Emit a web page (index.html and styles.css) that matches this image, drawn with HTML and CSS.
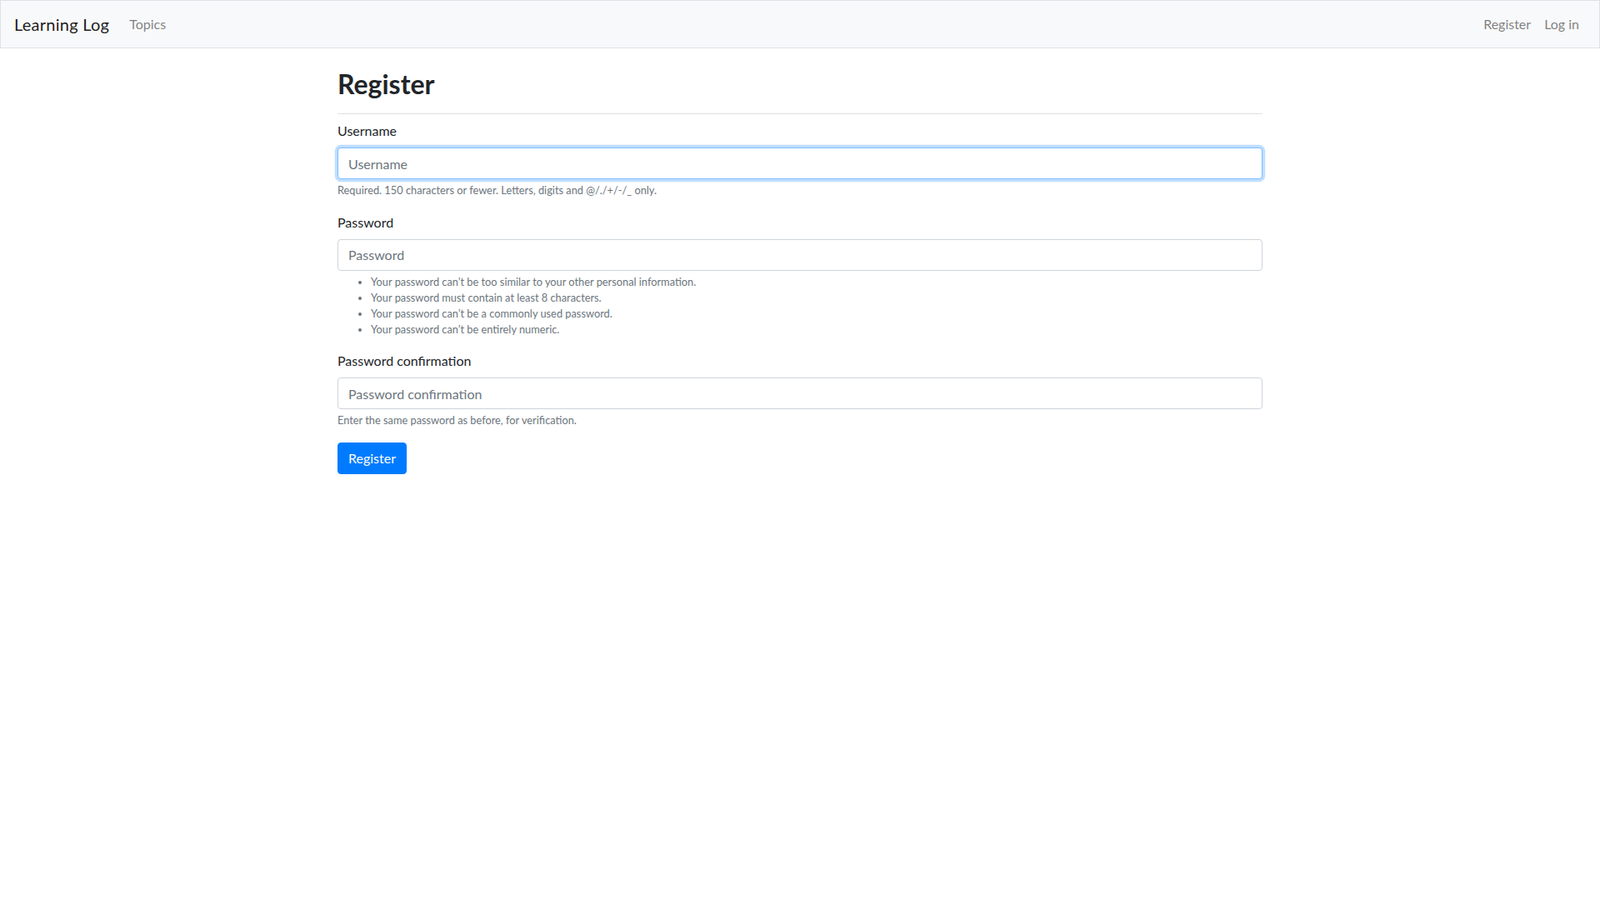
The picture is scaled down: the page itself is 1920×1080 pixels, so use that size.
FILE: index.html
```
<!DOCTYPE html>
<html lang="en">
<head>
<meta charset="utf-8">
<title>Learning Log</title>
<link rel="stylesheet" href="styles.css">
</head>
<body>
<nav class="navbar">
  <div class="nav-left">
    <a class="brand" href="#">Learning Log</a>
    <a class="nav-link" href="#">Topics</a>
  </div>
  <div class="nav-right">
    <a class="nav-link" href="#">Register</a>
    <a class="nav-link" href="#">Log in</a>
  </div>
</nav>
<main class="container">
  <div class="page-header">
    <h2 class="title">Register</h2>
  </div>
  <form class="form">
    <div class="form-group">
      <label class="label" for="id_username">Username</label>
      <input class="form-control is-focused" id="id_username" type="text" placeholder="Username">
      <small class="form-text">Required. 150 characters or fewer. Letters, digits and @/./+/-/_ only.</small>
    </div>
    <div class="form-group">
      <label class="label" for="id_password1">Password</label>
      <input class="form-control" id="id_password1" type="password" placeholder="Password">
      <small class="form-text">
        <ul class="help-list">
          <li>Your password can’t be too similar to your other personal information.</li>
          <li>Your password must contain at least 8 characters.</li>
          <li>Your password can’t be a commonly used password.</li>
          <li>Your password can’t be entirely numeric.</li>
        </ul>
      </small>
    </div>
    <div class="form-group">
      <label class="label" for="id_password2">Password confirmation</label>
      <input class="form-control" id="id_password2" type="password" placeholder="Password confirmation">
      <small class="form-text">Enter the same password as before, for verification.</small>
    </div>
    <button class="btn-primary" type="button">Register</button>
  </form>
</main>
</body>
</html>
```
FILE: styles.css
```
* { box-sizing: border-box; }
html, body {
  margin: 0;
  padding: 0;
  background: #fff;
}
body {
  font-family: "Segoe UI", Lato, "Noto Sans", sans-serif;
  font-size: 16px;
  line-height: 1.5;
  color: #212529;
}
a { text-decoration: none; }

.navbar {
  display: flex;
  justify-content: space-between;
  align-items: center;
  background: #f8f9fa;
  border: 1px solid #dee2e6;
  padding: 8px 16px;
  margin-bottom: 24px;
}
.nav-left, .nav-right {
  display: flex;
  align-items: center;
}
.brand {
  font-size: 20px;
  line-height: 30px;
  padding: 5px 0;
  margin-right: 16px;
  letter-spacing: 0.25px;
  color: rgba(0,0,0,.9);
}
.nav-link {
  display: block;
  padding: 8px 8px;
  line-height: 24px;
  color: rgba(0,0,0,.5);
}

.container {
  width: 1140px;
  margin: 0 auto;
  padding: 0 15px;
}
.page-header {
  padding-bottom: 8px;
  margin-bottom: 8px;
  border-bottom: 1px solid #dee2e6;
}
.title {
  margin: 0 0 8px;
  font-size: 32px;
  font-weight: 700;
  line-height: 1.2;
}
.form-group {
  margin-bottom: 16px;
}
.label {
  display: inline-block;
  margin-bottom: 8px;
}
.form-control {
  display: block;
  width: 100%;
  height: 38px;
  padding: 6px 12px;
  font-family: inherit;
  font-size: 16px;
  line-height: 1.5;
  color: #495057;
  background: #fff;
  border: 1px solid #ced4da;
  border-radius: 4px;
  outline: none;
}
.form-control::placeholder {
  color: #6c757d;
  opacity: 1;
}
.form-control.is-focused {
  border-color: #80bdff;
  box-shadow: 0 0 0 3.2px rgba(0,123,255,.25);
}
.form-text {
  display: block;
  margin-top: 4px;
  font-size: 12.8px;
  color: #6c757d;
}
.help-list {
  margin: 0;
  padding-left: 40px;
}
.btn-primary {
  display: inline-block;
  font-family: inherit;
  font-size: 16px;
  line-height: 1.5;
  padding: 6px 12px;
  color: #fff;
  background: #007bff;
  border: 1px solid #007bff;
  border-radius: 4px;
}
```
